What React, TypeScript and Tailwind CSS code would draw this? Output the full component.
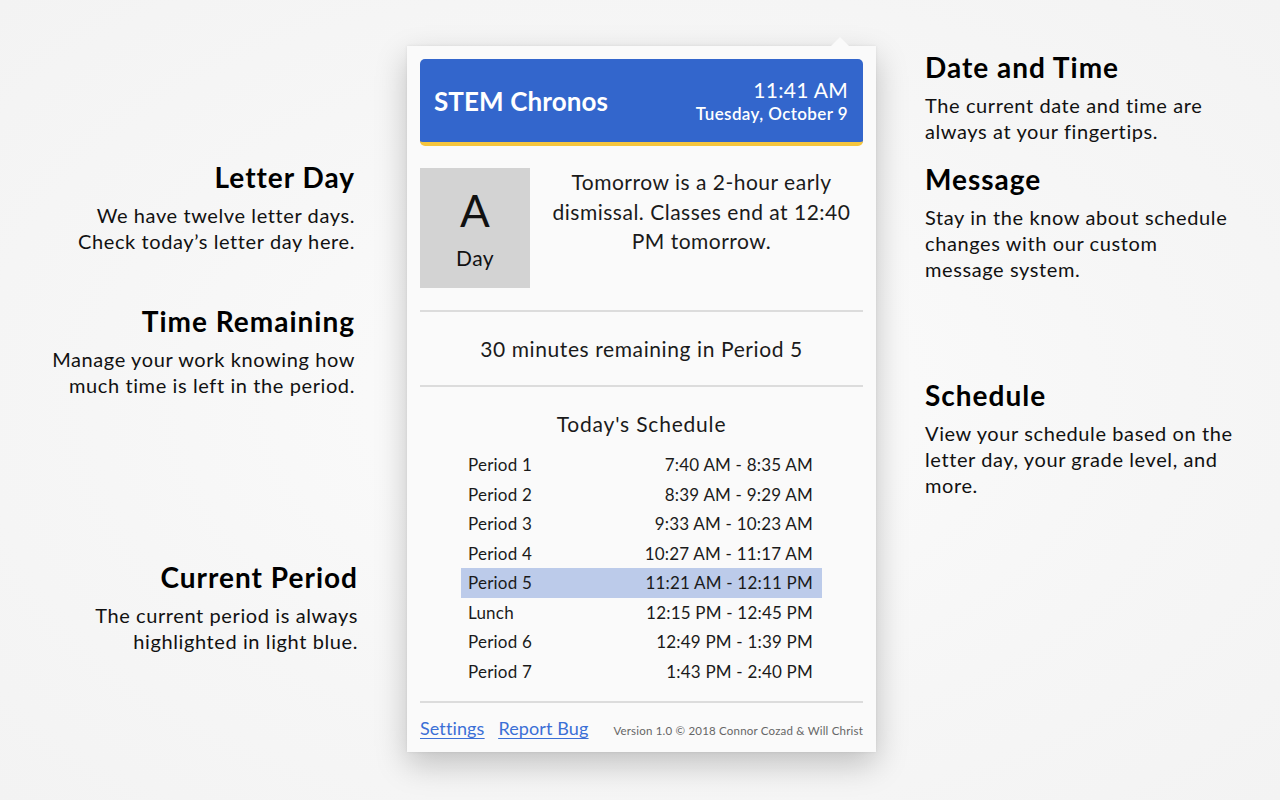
import React from 'react'

const font = { fontFamily: 'Lato, "Noto Sans", "Liberation Sans", sans-serif' }

const schedule = [
  { name: 'Period 1', time: '7:40 AM - 8:35 AM' },
  { name: 'Period 2', time: '8:39 AM - 9:29 AM' },
  { name: 'Period 3', time: '9:33 AM - 10:23 AM' },
  { name: 'Period 4', time: '10:27 AM - 11:17 AM' },
  { name: 'Period 5', time: '11:21 AM - 12:11 PM', current: true },
  { name: 'Lunch', time: '12:15 PM - 12:45 PM' },
  { name: 'Period 6', time: '12:49 PM - 1:39 PM' },
  { name: 'Period 7', time: '1:43 PM - 2:40 PM' },
]

function Note({ title, lines, className = '' }: { title: string; lines: string[]; className?: string }) {
  return (
    <div className={className}>
      <h3 className="text-[28px] font-bold leading-[32px] tracking-[1px] text-black">{title}</h3>
      <p className="mt-[9px] text-[20px] leading-[26px] tracking-[0.6px] text-[#111]">
        {lines.map((l, i) => (
          <span key={i} className="block">{l}</span>
        ))}
      </p>
    </div>
  )
}

export default function App() {
  return (
    <div
      className="w-full h-[800px] overflow-hidden bg-[radial-gradient(ellipse_at_center,#fcfcfc_0%,#f6f6f6_60%,#f3f3f3_100%)] flex"
      style={font}
    >
      {/* left notes */}
      <div className="w-[355px] shrink-0 flex flex-col items-end text-right">
        <Note className="mt-[161px]" title="Letter Day" lines={['We have twelve letter days.', 'Check today’s letter day here.']} />
        <Note className="mt-[51px]" title="Time Remaining" lines={['Manage your work knowing how', 'much time is left in the period.']} />
        <Note className="mt-[163px] mr-[-3px]" title="Current Period" lines={['The current period is always', 'highlighted in light blue.']} />
      </div>

      {/* popover */}
      <div className="ml-[52px] mt-[46px] w-[469px] h-[706px] shrink-0 relative bg-[#fafafa] shadow-[0_12px_30px_rgba(0,0,0,0.22),0_0_3px_rgba(0,0,0,0.08)] px-[13px] pt-[13px] flex flex-col">
        <div className="absolute -top-[9px] right-[26px] w-0 h-0 border-l-[10px] border-r-[10px] border-b-[10px] border-l-transparent border-r-transparent border-b-[#fafafa]" />

        {/* header */}
        <div className="h-[87px] rounded-[5px] bg-[#3366cc] border-b-[4px] border-[#f5c53d] flex items-center justify-between pl-[14px] pr-[15px] text-white">
          <span className="text-[26px] font-bold tracking-[0.1px] mt-[1px]">STEM Chronos</span>
          <div className="flex flex-col items-end">
            <span className="text-[21px] leading-[26px] tracking-[0.3px]">11:41 AM</span>
            <span className="text-[17px] leading-[22px] font-semibold tracking-[0.4px]">Tuesday, October 9</span>
          </div>
        </div>

        {/* letter day + message */}
        <div className="mt-[22px] flex">
          <div className="w-[110px] h-[120px] bg-[#d3d3d3] flex flex-col items-center text-[#111]">
            <span className="text-[44px] leading-[52px] mt-[16px]">A</span>
            <span className="text-[21px] leading-[26px] mt-[9px] tracking-[0.4px]">Day</span>
          </div>
          <p className="flex-1 pl-[10px] text-center text-[21px] leading-[29.5px] tracking-[0.5px] text-[#1a1a1a] -mt-[1px]">
            <span className="block">Tomorrow is a 2-hour early</span>
            <span className="block">dismissal. Classes end at 12:40</span>
            <span className="block">PM tomorrow.</span>
          </p>
        </div>

        <div className="mt-[22px] h-[2px] bg-[#dcdcdc]" />
        <div className="h-[73px] flex items-center justify-center text-[21px] tracking-[0.6px] text-[#1a1a1a]">
          30 minutes remaining in Period 5
        </div>
        <div className="h-[2px] bg-[#dcdcdc]" />

        {/* schedule */}
        <h4 className="mt-[22px] text-center text-[21px] leading-[30px] tracking-[0.8px] text-[#1a1a1a]">Today's Schedule</h4>
        <div className="mt-[11px] w-[361px] mx-auto">
          {schedule.map((r) => (
            <div
              key={r.name}
              className={`h-[29.5px] pl-[7px] pr-[9px] flex items-center justify-between text-[17px] tracking-[0.2px] text-[#1a1a1a] ${r.current ? 'bg-[#bccbea]' : ''}`}
            >
              <span>{r.name}</span>
              <span>{r.time}</span>
            </div>
          ))}
        </div>

        <div className="mt-[15px] h-[2px] bg-[#dcdcdc]" />
        <div className="flex-1 flex items-center justify-between pt-[2px]">
          <div className="flex gap-[14px] text-[18px] tracking-[0.1px] text-[#3b6fd6] underline underline-offset-[3px]">
            <a href="#">Settings</a>
            <a href="#">Report Bug</a>
          </div>
          <span className="text-[11.5px] tracking-[0.2px] text-[#666] mt-[4px]">Version 1.0 © 2018 Connor Cozad &amp; Will Christ</span>
        </div>
      </div>

      {/* right notes */}
      <div className="ml-[49px] flex flex-col">
        <Note className="mt-[51px]" title="Date and Time" lines={['The current date and time are', 'always at your fingertips.']} />
        <Note className="mt-[19px]" title="Message" lines={['Stay in the know about schedule', 'changes with our custom', 'message system.']} />
        <Note className="mt-[97px]" title="Schedule" lines={['View your schedule based on the', 'letter day, your grade level, and', 'more.']} />
      </div>
    </div>
  )
}
